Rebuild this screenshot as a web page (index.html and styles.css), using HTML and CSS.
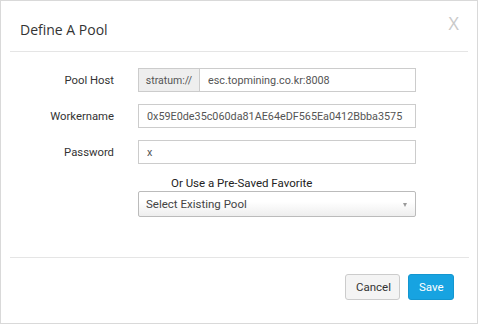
FILE: index.html
```html
<!doctype html>
<html lang="en">
  <head>
    <meta charset="UTF-8" />
    <meta name="viewport" content="width=device-width, initial-scale=1.0" />
    <title>Define A Pool</title>
    <link rel="stylesheet" href="styles.css">
  </head>
  <body>
    <div class="modal">
      <div class="modal-header">
        <h4 class="modal-title">Define A Pool</h4>
        <span class="close">X</span>
      </div>
      <div class="modal-body">
        <div class="form-row">
          <label class="form-label">Pool Host</label>
          <div class="input-group">
            <span class="addon">stratum://</span>
            <input class="field" type="text" value="esc.topmining.co.kr:8008" />
          </div>
        </div>
        <div class="form-row">
          <label class="form-label">Workername</label>
          <input class="field boxed" type="text" value="0x59E0de35c060da81AE64eDF565Ea0412Bbba3575" />
        </div>
        <div class="form-row">
          <label class="form-label">Password</label>
          <input class="field boxed" type="text" value="x" />
        </div>
        <div class="favorite">
          <div class="favorite-label">Or Use a Pre-Saved Favorite</div>
          <div class="select">
            <span>Select Existing Pool</span>
            <span class="arrow"></span>
          </div>
        </div>
      </div>
      <div class="modal-footer">
        <button class="btn btn-default">Cancel</button>
        <button class="btn btn-primary">Save</button>
      </div>
    </div>
  </body>
</html>
```

FILE: styles.css
```css
html, body {
  margin: 0;
  background: #fff;
}
.modal {
  box-sizing: border-box;
  width: 478px;
  height: 324px;
  border: 1px solid #d9d9d9;
  font-family: Roboto, "Liberation Sans", sans-serif;
  color: #333;
}
.modal-header {
  margin: 0 9px;
  height: 50px;
  border-bottom: 1px solid #e5e5e5;
  display: flex;
  align-items: center;
  justify-content: space-between;
  padding: 0 10px 0 10px;
}
.modal-title {
  margin: 0;
  padding-top: 7px;
  font-family: "Open Sans", sans-serif;
  font-weight: 400;
  font-size: 14px;
  color: #333;
}
.close {
  font-family: "Open Sans", sans-serif;
  font-size: 18px;
  color: #c9c9c9;
  margin-top: -6px;
  margin-right: -1px;
}
.modal-body {
  padding: 16px 0 0 0;
  height: 206px;
  box-sizing: border-box;
  border-bottom: 1px solid #e5e5e5;
  margin: 0 8px 0 9px;
}
.form-row {
  display: grid;
  grid-template-columns: 104px 278px;
  column-gap: 24px;
  align-items: center;
  margin-bottom: 12px;
}
.form-label {
  text-align: right;
  font-size: 11.3px;
  color: #333;
}
.input-group {
  display: flex;
  height: 24px;
  box-sizing: border-box;
  border: 1px solid #ccc;
}
.addon {
  width: 60px;
  background: #eee;
  border-right: 1px solid #ccc;
  font-size: 10.5px;
  color: #555;
  display: flex;
  align-items: center;
  justify-content: center;
}
.field {
  flex: 1;
  min-width: 0;
  border: none;
  outline: none;
  padding: 0 0 0 8px;
  font-family: Roboto, "Liberation Sans", sans-serif;
  font-size: 10.8px;
  color: #555;
  background: #fff;
}
.field.boxed {
  height: 24px;
  box-sizing: border-box;
  border: 1px solid #ccc;
}
.favorite {
  margin-left: 128px;
  width: 278px;
}
.favorite-label {
  padding-left: 33px;
  font-size: 11.5px;
  line-height: 14px;
  color: #222;
}
.select {
  margin-top: 1px;
  height: 26px;
  box-sizing: border-box;
  border: 1px solid #bbb;
  border-radius: 2px;
  background: linear-gradient(#fff 40%, #eee);
  display: flex;
  align-items: center;
  justify-content: space-between;
  padding: 0 8px 0 7px;
  font-size: 11.5px;
  color: #444;
}
.arrow {
  width: 0;
  height: 0;
  border-left: 2.5px solid transparent;
  border-right: 2.5px solid transparent;
  border-top: 4px solid #999;
  margin-top: 2px;
}
.modal-footer {
  display: flex;
  justify-content: flex-end;
  gap: 8px;
  padding: 16px 23px 0 0;
}
.btn {
  height: 26px;
  border-radius: 3px;
  font-family: Roboto, "Liberation Sans", sans-serif;
  font-size: 11.5px;
  padding: 0 10px;
}
.btn-default {
  width: 55px;
  background: #f4f4f4;
  border: 1px solid #ccc;
  color: #333;
}
.btn-primary {
  width: 46px;
  background: #17a3e1;
  border: 1px solid #1396d0;
  color: #fff;
}
```
